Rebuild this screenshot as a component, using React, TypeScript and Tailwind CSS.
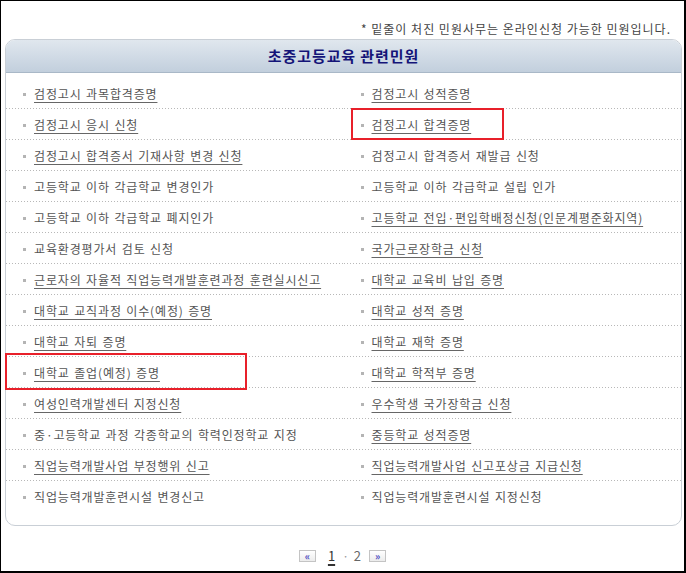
import React from "react";

type Item = { label: string; link?: boolean; boxed?: boolean };

const leftItems: Item[] = [
  { label: "검정고시 과목합격증명", link: true },
  { label: "검정고시 응시 신청", link: true },
  { label: "검정고시 합격증서 기재사항 변경 신청", link: true },
  { label: "고등학교 이하 각급학교 변경인가" },
  { label: "고등학교 이하 각급학교 폐지인가" },
  { label: "교육환경평가서 검토 신청" },
  { label: "근로자의 자율적 직업능력개발훈련과정 훈련실시신고", link: true },
  { label: "대학교 교직과정 이수(예정) 증명", link: true },
  { label: "대학교 자퇴 증명", link: true },
  { label: "대학교 졸업(예정) 증명", link: true, boxed: true },
  { label: "여성인력개발센터 지정신청", link: true },
  { label: "중·고등학교 과정 각종학교의 학력인정학교 지정" },
  { label: "직업능력개발사업 부정행위 신고", link: true },
  { label: "직업능력개발훈련시설 변경신고" },
];

const rightItems: Item[] = [
  { label: "검정고시 성적증명", link: true },
  { label: "검정고시 합격증명", link: true, boxed: true },
  { label: "검정고시 합격증서 재발급 신청" },
  { label: "고등학교 이하 각급학교 설립 인가" },
  { label: "고등학교 전입·편입학배정신청(인문계평준화지역)", link: true },
  { label: "국가근로장학금 신청", link: true },
  { label: "대학교 교육비 납입 증명", link: true },
  { label: "대학교 성적 증명", link: true },
  { label: "대학교 재학 증명", link: true },
  { label: "대학교 학적부 증명", link: true },
  { label: "우수학생 국가장학금 신청", link: true },
  { label: "중등학교 성적증명", link: true },
  { label: "직업능력개발사업 신고포상금 지급신청", link: true },
  { label: "직업능력개발훈련시설 지정신청" },
];

function Cell({ item, last, side }: { item: Item; last: boolean; side: "l" | "r" }) {
  return (
    <div className="relative">
      <div className="flex items-center h-[30px] pl-[17px] pt-[2px]">
        <span className="w-[3px] h-[3px] bg-[#b4b4b4] shrink-0" />
        <span
          className={
            "ml-[8px] whitespace-nowrap text-[12px] leading-[14px] tracking-[0.85px] [word-spacing:1px] text-[#555] " +
            (item.link ? "underline underline-offset-[3px] decoration-[#666] cursor-pointer" : "")
          }
        >
          {item.label}
        </span>
      </div>
      {!last && (
        <div className="h-px bg-[linear-gradient(to_right,#b8b8b8_1px,transparent_1px)] bg-[length:3px_1px] bg-repeat-x" />
      )}
      {item.boxed && side === "r" && (
        <div className="absolute left-[7px] top-[-1px] w-[153px] h-[32px] border-2 border-[#e8202a] pointer-events-none" />
      )}
      {item.boxed && side === "l" && (
        <div className="absolute left-[-1px] top-[-4px] w-[242px] h-[37px] border-2 border-[#e8202a] pointer-events-none" />
      )}
    </div>
  );
}

export default function App() {
  return (
    <div
      className="w-[686px] h-[573px] bg-white border-l border-t border-r-2 border-b-2 border-black overflow-hidden"
      style={{ fontFamily: '"Noto Sans CJK KR", "Noto Sans", sans-serif' }}
    >
      {/* notice */}
      <div className="h-[38px] pt-[19px] pr-[13px] text-right text-[12px] leading-[18px] tracking-[1px] text-[#444]">
        * 밑줄이 처진 민원사무는 온라인신청 가능한 민원입니다.
      </div>

      {/* panel */}
      <div className="ml-[4px] w-[677px] rounded-[10px] border border-[#c9cfd6] bg-white">
        <div className="h-[33px] rounded-t-[9px] bg-[linear-gradient(to_bottom,#e0e7ee,#c2cfdd)] border-b border-[#a9b8c7] flex items-center justify-center">
          <h2 className="text-[15px] font-bold text-[#141478] tracking-[0.9px]">초중고등교육 관련민원</h2>
        </div>

        <div className="pt-[5px] pb-[14px] grid grid-cols-2">
          {leftItems.map((l, i) => (
            <React.Fragment key={i}>
              <Cell item={l} side="l" last={i === leftItems.length - 1} />
              <Cell item={rightItems[i]} side="r" last={i === rightItems.length - 1} />
            </React.Fragment>
          ))}
        </div>
      </div>

      {/* pagination */}
      <div className="mt-[23px] flex items-center justify-center">
        <button className="w-[17px] h-[12px] border border-[#c4c4c4] bg-[linear-gradient(to_bottom,#ffffff,#ececec)] flex items-center justify-center text-[10px] leading-none font-bold text-[#4b4bc0]">
          «
        </button>
        <span className="ml-[12px] text-[13px] leading-[14px] text-[#333] underline underline-offset-[3px] decoration-2">1</span>
        <span className="ml-[7px] text-[12px] leading-[14px] text-[#999]">·</span>
        <span className="ml-[5px] text-[13px] leading-[14px] text-[#666]">2</span>
        <button className="ml-[8px] w-[17px] h-[12px] border border-[#c4c4c4] bg-[linear-gradient(to_bottom,#ffffff,#ececec)] flex items-center justify-center text-[10px] leading-none font-bold text-[#4b4bc0]">
          »
        </button>
      </div>
    </div>
  );
}
